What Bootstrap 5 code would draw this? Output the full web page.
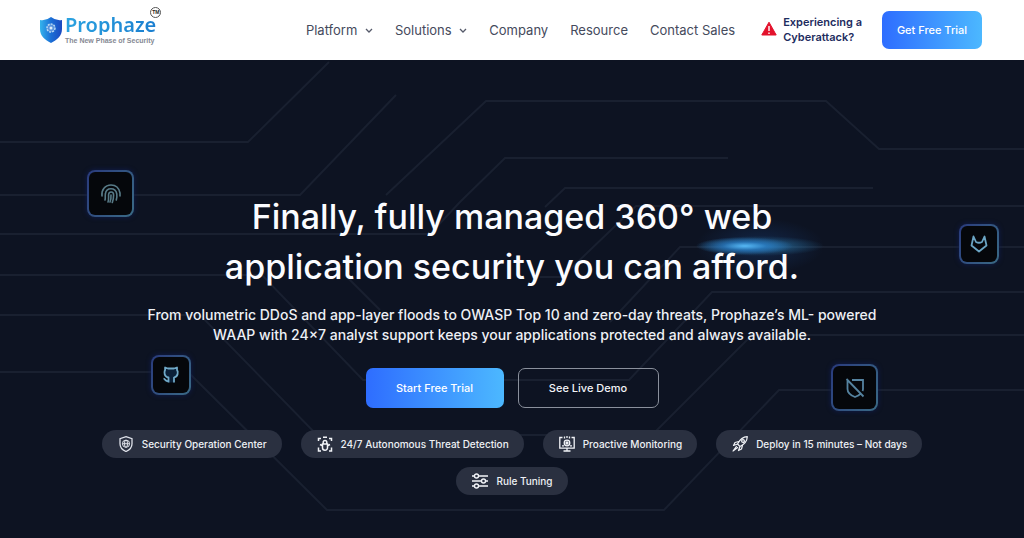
<!DOCTYPE html>
<html lang="en">
<head>
<meta charset="utf-8">
<meta name="viewport" content="width=device-width, initial-scale=1">
<title>Prophaze – The New Phase of Security</title>
<link href="https://cdn.jsdelivr.net/npm/bootstrap@5.3.0/dist/css/bootstrap.min.css" rel="stylesheet">
<style>
  body { font-family: Inter, "Liberation Sans", sans-serif; background: #0d1322; }
  a { text-decoration: none; }

  .site-header { background: #fff; height: 60px; padding: 0 42px 0 40px; }
  .brand { color: inherit; position: relative; gap: 3px; }
  .brand-text { gap: 2px; }
  .brand-name {
    font: 600 20px/20px "Noto Sans", sans-serif;
    background: linear-gradient(90deg, #2ba3e0, #1b7fd0);
    -webkit-background-clip: text; background-clip: text; color: transparent;
  }
  .brand-tag { font: 700 7px/8px "Liberation Sans", sans-serif; color: #858993; }
  .brand-tm {
    position: absolute; right: -5px; top: -8px; width: 11px; height: 11px;
    border: 1px solid #555; border-radius: 50%; color: #222;
    font: 700 5px/9px "Liberation Sans", sans-serif; text-align: center;
  }
  .main-nav { gap: 22px; }
  .main-nav .nav-link { font-size: 13px; line-height: 20px; color: #454a5c; padding: 0; }
  .alert-link-top { font-size: 11px; line-height: 15px; font-weight: 600; color: #1d2c5e; gap: 6px; margin: 0 20px 0 26px; }
  .btn-grad {
    color: #fff; border: 0; border-radius: 7px;
    background: linear-gradient(90deg, #2e6dff, #4cb8ff);
  }
  .btn-grad:hover { color: #fff; }
  .btn-top { font-size: 11px; font-weight: 500; width: 100px; height: 38px; padding: 0; }

  .hero { position: relative; overflow: hidden; min-height: calc(100vh - 60px); padding: 132px 16px 40px; color: #fff; text-align: center; }
  .circuit { position: absolute; inset: 0; width: 100%; height: 100%; }
  .hero-body { position: relative; }
  .hero h1 { font-size: 34px; line-height: 50px; font-weight: 500; margin: 0; color: #fbfcff; }
  .hero-text { font-size: 14px; line-height: 20px; font-weight: 500; margin: 13px 0 23px; color: #eef0f5; }
  .hero-actions { gap: 14px; }
  .hero-btn { width: 138px; height: 40px; font-size: 11px; font-weight: 500; padding: 0; border-radius: 7px; }
  .btn-line { width: 141px; color: #f2f4f8; border: 1px solid #8a909c; }
  .btn-line:hover { color: #fff; border-color: #fff; }
  .pills { gap: 9px 19px; margin: 22px auto 0; max-width: 860px; }
  .pill { height: 28px; gap: 8px; padding: 0 15px 0 16px; border-radius: 14px; background: #2a3040; font-size: 10px; font-weight: 500; color: #eef0f5; }
  .pill svg { width: 16px; height: 16px; }

  .tile {
    position: absolute; display: flex; align-items: center; justify-content: center;
    width: 47px; height: 47px; border-radius: 8px; border: 2px solid transparent;
    background: linear-gradient(#05070b, #05070b) padding-box, linear-gradient(120deg, #293a7c, #3a6a85) border-box;
    box-shadow: 0 0 5px #101d50;
  }
  .tile-sm { width: 40px; height: 40px; }
  .tile-finger { left: 8.5%; top: 110px; }
  .tile-fox { left: 93.7%; top: 164px; }
  .tile-cat { left: 14.7%; top: 295px; }
  .tile-shield { left: 81.2%; top: 304px; }
  .flare { position: absolute; left: 68%; top: 158px; width: 128px; height: 56px;
    background: radial-gradient(38% 16% at 38% 50%, #56b8f5, #2a80ccaa 45%, transparent),
                radial-gradient(50% 18% at 50% 50%, #2f86b8bb, transparent),
                radial-gradient(50% 50% at 50% 50%, #1c4f9955, transparent); }
</style>
</head>
<body>
<header class="site-header d-flex align-items-center">
  <a class="brand d-flex align-items-center" href="#" aria-label="Prophaze home">
    <svg width="22" height="26" viewBox="0 0 22 26">
      <defs><linearGradient id="sh" x1="0" y1="0" x2="1" y2="0"><stop offset="0" stop-color="#35b4ec"/><stop offset=".5" stop-color="#1b6fd6"/><stop offset="1" stop-color="#1c49c0"/></linearGradient></defs>
      <path d="M0 3Q6 4 11 0q5 4 11 3v9c0 7-5 11-11 14C5 23 0 19 0 12z" fill="url(#sh)"/>
      <circle cx="11" cy="11" r="4" fill="#5a93dc" stroke="#b8d8f4" stroke-width="1.5" stroke-dasharray="2 1"/>
      <circle cx="11" cy="11" r="1.5" fill="#dcecfa"/>
    </svg>
    <span class="brand-text d-flex flex-column">
      <span class="brand-name">Prophaze</span>
      <span class="brand-tag">The New Phase of Security</span>
    </span>
    <span class="brand-tm">TM</span>
  </a>
  <nav class="main-nav nav ms-auto flex-nowrap" aria-label="Main">
    <a class="nav-link" href="#">Platform <svg class="ms-1" width="8" height="6" viewBox="0 0 8 6" fill="none" stroke="#555a6a" stroke-width="1.3"><path d="M1 1l3 3 3-3"/></svg></a>
    <a class="nav-link" href="#">Solutions <svg class="ms-1" width="8" height="6" viewBox="0 0 8 6" fill="none" stroke="#555a6a" stroke-width="1.3"><path d="M1 1l3 3 3-3"/></svg></a>
    <a class="nav-link" href="#">Company</a>
    <a class="nav-link" href="#">Resource</a>
    <a class="nav-link" href="#">Contact Sales</a>
  </nav>
  <a class="alert-link-top d-flex align-items-center" href="#">
    <svg width="16" height="18" viewBox="0 0 16 18"><path d="M8 1.2L15.2 14H.8z" fill="#e3122c" stroke="#e3122c" stroke-linejoin="round"/><path d="M8 5v5M8 11.500V13" stroke="#fff" stroke-width="1.4"/></svg>
    <span>Experiencing a<br>Cyberattack?</span>
  </a>
  <button type="button" class="btn btn-grad btn-top">Get Free Trial</button>
</header>

<main class="hero">
  <svg class="circuit" viewBox="0 0 1024 478" preserveAspectRatio="xMidYMid slice" fill="none" stroke="#192030" stroke-width="2" aria-hidden="true">
    <path d="M0 82H248L329 2"/>
    <path d="M0 135H300L396 35"/>
    <path d="M386 135L486 41H826L879 89H1024"/>
    <path d="M0 174H430L460 142L505 98H728"/>
    <path d="M0 215H262L363 320H629L712 232H1024"/>
    <path d="M545 147L565 128H873"/>
    <path d="M1024 146H636L562 217H540"/>
    <path d="M0 255H200L317 375H652L752 275H1024"/>
    <path d="M0 312H188L327 450H664L779 330H1024"/>
    <path d="M345 215L380 250"/>
    <path d="M1024 187H680L610 262"/>
  </svg>
  <div class="flare"></div>
  <div class="tile tile-finger">
    <svg width="22" height="22" viewBox="0 0 22 22" fill="none" stroke="#587b88" stroke-width="1.6" stroke-linecap="round">
      <path d="M2 13c-.8-6 3-11 9-11 4.500 0 8 3 9 8v3"/><path d="M5 17c.6-2 0-4 .4-6 .8-7 10.200-7 11.400 0 .3 2 0 4-.5 6"/><path d="M8 19c1-3 .4-5 .6-7.500.5-3.500 5-3.300 5 .5 0 3-.4 5-1.300 7.500"/><path d="M11 12c.2 3-.2 5-1 7"/>
    </svg>
  </div>
  <div class="tile tile-sm tile-fox">
    <svg width="18" height="18" viewBox="0 0 18 18" fill="none" stroke="#6ba5c4" stroke-width="1.8" stroke-linejoin="round"><path d="M3.500 1.500L6 7q3 1.500 6 0l2.500-5.500 2 9L9 16.500 1.500 10.500z"/></svg>
  </div>
  <div class="tile tile-sm tile-cat">
    <svg width="18" height="18" viewBox="0 0 18 18" fill="#0b2038" stroke="#70a9c8" stroke-width="1.8" stroke-linejoin="round"><path d="M6.500 16.500v-5C3.500 11 2.500 9 2.500 6.500c0-1 .3-2 .6-2.500V1.500L6 2.500h6l3-1v2.500c1 1 .9 2.500.6 4-.4 2-1.600 3-3.600 3.500v5"/><path d="M6.500 15c-3 .8-3-2-5-2.500" fill="none"/></svg>
  </div>
  <div class="tile tile-shield">
    <svg width="22" height="22" viewBox="0 0 22 22" fill="none" stroke="#5583a0" stroke-width="1.8"><path d="M8 3h11v9c0 .7-.2 1.500-.5 2M3.500 3v9c0 4 3.500 6.500 7.500 8 2-.8 4-1.700 5.500-3.200M2.500 2l17 17.500"/></svg>
  </div>

  <div class="hero-body">
    <h1>Finally, fully managed 360° web<br>application security you can afford.</h1>
    <p class="hero-text">From volumetric DDoS and app-layer floods to OWASP Top 10 and zero-day threats, Prophaze’s ML- powered<br>WAAP with 24×7 analyst support keeps your applications protected and always available.</p>
    <div class="hero-actions d-flex justify-content-center">
      <button type="button" class="btn btn-grad hero-btn">Start Free Trial</button>
      <button type="button" class="btn hero-btn btn-line">See Live Demo</button>
    </div>
    <ul class="pills list-unstyled d-flex flex-wrap justify-content-center">
      <li class="pill d-flex align-items-center">
        <svg viewBox="0 0 16 16" fill="none" stroke="#dfe2ea"><path d="M8 .7l6 2v5c0 4-2.500 6.300-6 7.800C4.500 14 2 11.700 2 7.700v-5z" stroke-width="1.300"/><circle cx="8" cy="7.700" r="3.600"/><ellipse cx="8" cy="7.700" rx="1.500" ry="3.600"/><path d="M4.400 7.700h7.200"/></svg>
        Security Operation Center</li>
      <li class="pill d-flex align-items-center">
        <svg viewBox="0 0 16 16" fill="none" stroke="#f2f4f8" stroke-width="1.500"><path d="M1.500 5V2.500H4M12 2.500h2.500V5M1.500 11.500V15H4M12 15h2.500v-3.500M6 1.300h4"/><path d="M5.500 8h5v3.800a2.500 2.500 0 01-5 0zM6.200 8V6.300a1.800 1.800 0 013.600 0V8M3 8.500l2 1M13 8.500l-2 1"/></svg>
        24/7 Autonomous Threat Detection</li>
      <li class="pill d-flex align-items-center">
        <svg viewBox="0 0 16 16" fill="none" stroke="#f2f4f8" stroke-width="1.300"><path d="M3.500 1.500H.8v10.700h14.400V1.500h-2.700M8 12v2.500M4.500 15h7M5.500.5v2M8 0v2M10.500.5v2"/><circle cx="8" cy="7" r="2.800"/><circle cx="8" cy="7" r="1" fill="#f2f4f8"/><path d="M3 9.800h2M11 9.800h2"/></svg>
        Proactive Monitoring</li>
      <li class="pill d-flex align-items-center">
        <svg viewBox="0 0 16 16" fill="none" stroke="#f2f4f8" stroke-width="1.200" stroke-linejoin="round"><path d="M15.300.7c-4 .2-7.300 2.500-9.800 7.300L8 10.500c4.800-2.500 7.100-5.800 7.300-9.800zM6.700 5.500L3 6.500 1.500 9.500l4-1.500M10.500 9.300l-1 3.700-3 1.500L8 10.500M4.700 10L1 15l5-3.700"/><circle cx="11" cy="5" r="1.400"/></svg>
        Deploy in 15 minutes – Not days</li>
      <li class="pill d-flex align-items-center">
        <svg viewBox="0 0 16 16" fill="none" stroke="#f2f4f8" stroke-width="1.400"><path d="M0 3h2.500M6.500 3H16M0 8h9.500M13.500 8H16M0 13h2.500M6.500 13H16"/><circle cx="4.500" cy="3" r="2"/><circle cx="11.500" cy="8" r="2"/><circle cx="4.500" cy="13" r="2"/></svg>
        Rule Tuning</li>
    </ul>
  </div>
</main>
<script src="https://cdn.jsdelivr.net/npm/bootstrap@5.3.0/dist/js/bootstrap.bundle.min.js"></script>
</body>
</html>
